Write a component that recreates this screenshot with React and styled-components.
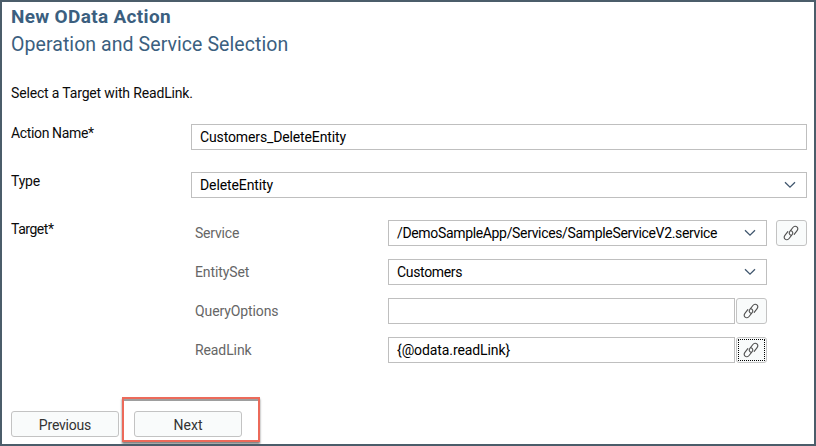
import React from "react";
import styled, { createGlobalStyle, css } from "styled-components";

const GlobalStyle = createGlobalStyle`
  *, *::before, *::after { box-sizing: border-box; }
  body { margin: 0; background: #fff; font-family: Roboto, "Liberation Sans", sans-serif; }
`;

const Dialog = styled.main`
  width: 816px;
  height: 446px;
  border: 2px solid #4b5d6a;
  padding: 3px 7px 0 9px;
  background: #fff;
  color: #0b0b0b;
  font-size: 14px;
  overflow: hidden;
`;

const Title = styled.h1`
  margin: 0;
  height: 24px;
  line-height: 24px;
  font-size: 19px;
  font-weight: 700;
  color: #3b5f7f;
`;

const Subtitle = styled.h2`
  margin: 0;
  padding-top: 4px;
  height: 30px;
  line-height: 24px;
  font-size: 19.5px;
  font-weight: 400;
  color: #3b5f7f;
`;

const Text = styled.span`
  white-space: pre;
  letter-spacing: ${(p) => p.$spacing || 0}px;
`;

const Hint = styled.p`
  margin: 24px 0 0;
  height: 20px;
  line-height: 20px;
`;

const Form = styled.div`
  display: grid;
  grid-template-columns: 180px 1fr;
  row-gap: 22px;
  margin-top: 21px;
`;

const Label = styled.div`
  height: 18px;
  line-height: 18px;
`;

const Field = styled.div`
  display: flex;
  align-items: center;
  justify-content: space-between;
  width: ${(p) => (p.$width ? `${p.$width}px` : "100%")};
  height: 26px;
  padding: 0 10px 0 8px;
  border: 1px solid #bfbfbf;
  background: #fff;
  color: #000;
`;

const TargetGrid = styled.div`
  display: grid;
  grid-template-columns: 193px 1fr;
  row-gap: 13px;
  padding-left: 4px;
`;

const SubLabel = styled.div`
  line-height: 26px;
  color: #666;
`;

const Controls = styled.div`
  display: flex;
  gap: ${(p) => p.$gap || 1}px;
`;

const IconButton = styled.button`
  display: flex;
  align-items: center;
  justify-content: center;
  width: 31px;
  height: 26px;
  padding: 0 1px 0 0;
  border: 1px solid #c3c3c3;
  border-radius: 3px;
  background: #f9fbfb;
  ${(p) =>
    p.$focused &&
    css`
      outline: 1px dotted #000;
      outline-offset: -3px;
    `}
`;

const Footer = styled.footer`
  display: flex;
  align-items: flex-start;
  gap: 3px;
  margin-top: 34px;
`;

const Button = styled.button`
  width: 108px;
  height: 26px;
  padding: 1px 0 0;
  border: 1px solid #c3c3c3;
  border-radius: 3px;
  background: #f9fbfb;
  color: #333;
  font: 14px Roboto, sans-serif;
`;

const PreviousSlot = styled.div`
  padding-top: 14px;
`;

const Highlight = styled.div`
  width: 138px;
  height: 45px;
  padding: 12px 0 0 10px;
  border: 2px solid #ec6a5a;
  box-shadow: 0 2px 2px rgba(0, 0, 0, 0.5), inset 0 2px 0 rgba(0, 0, 0, 0.38);
`;

const Chevron = () => (
  <svg width="12" height="8" viewBox="0 0 12 8" fill="none" aria-hidden="true">
    <path d="M1 1.3 6 6.2 11 1.3" stroke="#40566d" strokeWidth="1.3" />
  </svg>
);

const LinkIcon = () => (
  <svg width="16" height="16" viewBox="0 0 16 16" fill="none" stroke="#505050" strokeWidth="1.1" strokeLinecap="round" aria-hidden="true">
    <path d="M7.9 10.3C6.3 9.7 5.6 7.9 6.9 6.3L9.9 2.5C11.2 .9 12.9 1 13.9 1.9C15 2.9 15.1 4.4 13.9 5.9L11.2 9.3" />
    <path d="M8.1 5.7C9.7 6.3 10.4 8.1 9.1 9.7L6.1 13.5C4.8 15.1 3.1 15 2.1 14.1C1 13.1.9 11.6 2.1 10.1L4.8 6.7" />
  </svg>
);

export default function App() {
  return (
    <>
      <GlobalStyle />
      <Dialog>
        <Title>
          <Text $spacing={0.32}>New OData Action</Text>
        </Title>
        <Subtitle>
          <Text $spacing={0.07}>Operation and Service Selection</Text>
        </Subtitle>
        <Hint>
          <Text $spacing={-0.16}>Select a Target with ReadLink.</Text>
        </Hint>
        <Form>
          <Label>
            <Text $spacing={-0.36}>Action Name*</Text>
          </Label>
          <Field>
            <Text $spacing={-0.13}>Customers_DeleteEntity</Text>
          </Field>
          <Label>
            <Text $spacing={-0.2}>Type</Text>
          </Label>
          <Field>
            <Text $spacing={-0.1}>DeleteEntity</Text>
            <Chevron />
          </Field>
          <Label>
            <Text $spacing={-0.45}>Target*</Text>
          </Label>
          <TargetGrid>
            <SubLabel>
              <Text $spacing={-0.2}>Service</Text>
            </SubLabel>
            <Controls $gap={9}>
              <Field $width={379}>
                <Text $spacing={-0.34}>/DemoSampleApp/Services/SampleServiceV2.service</Text>
                <Chevron />
              </Field>
              <IconButton aria-label="Link service">
                <LinkIcon />
              </IconButton>
            </Controls>
            <SubLabel>
              <Text $spacing={-0.1}>EntitySet</Text>
            </SubLabel>
            <Controls>
              <Field $width={379}>
                <Text $spacing={-0.33}>Customers</Text>
                <Chevron />
              </Field>
            </Controls>
            <SubLabel>
              <Text $spacing={-0.1}>QueryOptions</Text>
            </SubLabel>
            <Controls>
              <Field $width={347} />
              <IconButton aria-label="Link query options">
                <LinkIcon />
              </IconButton>
            </Controls>
            <SubLabel>
              <Text $spacing={-0.1}>ReadLink</Text>
            </SubLabel>
            <Controls>
              <Field $width={347}>
                <Text $spacing={-0.1}>{"{@odata.readLink}"}</Text>
              </Field>
              <IconButton $focused aria-label="Link read link">
                <LinkIcon />
              </IconButton>
            </Controls>
          </TargetGrid>
        </Form>
        <Footer>
          <PreviousSlot>
            <Button>
              <Text $spacing={-0.2}>Previous</Text>
            </Button>
          </PreviousSlot>
          <Highlight>
            <Button>
              <Text>Next</Text>
            </Button>
          </Highlight>
        </Footer>
      </Dialog>
    </>
  );
}
